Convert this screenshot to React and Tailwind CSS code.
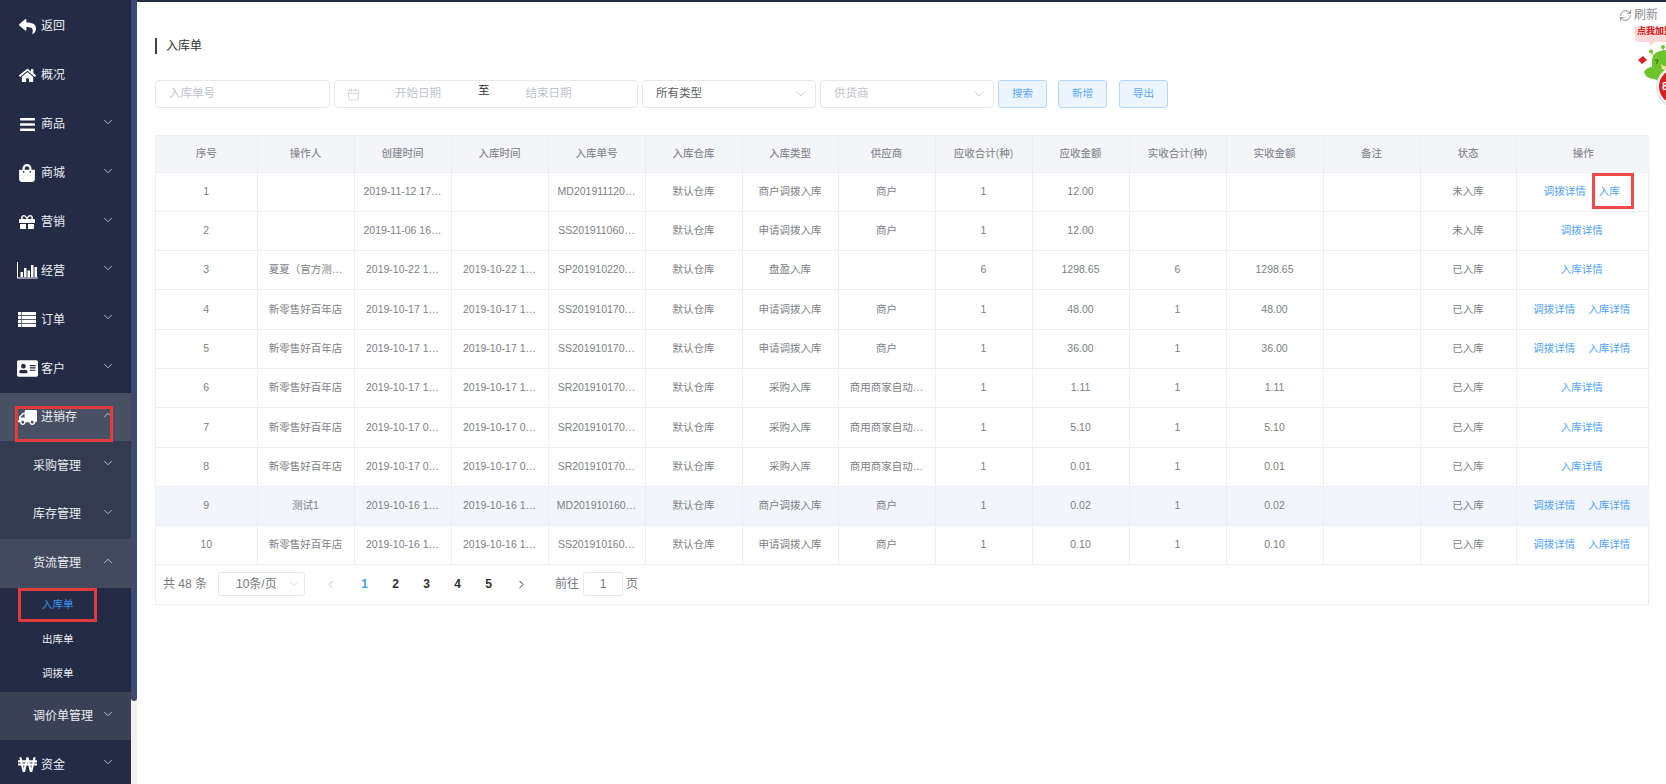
import React from 'react';
import { ChevronDown, ChevronUp, ChevronLeft, ChevronRight, RefreshCw, Calendar } from 'lucide-react';
import { FaReply, FaHome, FaBars, FaShoppingBag, FaGift, FaAddressCard, FaTruck, FaWonSign } from 'react-icons/fa';

const ChartIcon = () => (
  <svg width="21" height="17" viewBox="0 0 21 17" fill="currentColor">
    <path d="M0 0h1v15.5h21v1H0z" />
    <rect x="3.5" y="10" width="2.5" height="5" />
    <rect x="7" y="6" width="2.5" height="9" />
    <rect x="10.5" y="8.5" width="2.5" height="6.5" />
    <rect x="14" y="3" width="2.5" height="12" />
    <rect x="17.5" y="5" width="2.5" height="10" />
  </svg>
);

const ListIcon = () => (
  <svg width="18" height="15" viewBox="0 0 18 15" fill="currentColor">
    <path d="M0 0h3.4v3.2H0zM4 0h14v3.2H4zM0 3.9h3.4v3.2H0zM4 3.9h14v3.2H4zM0 7.8h3.4V11H0zM4 7.8h14V11H4zM0 11.7h3.4V15H0zM4 11.7h14V15H4z" />
  </svg>
);

const topMenu = [
  { label: '返回', icon: <FaReply className="w-[17px] h-[17px]" /> },
  { label: '概况', icon: <FaHome className="w-[17px] h-[17px]" /> },
  { label: '商品', icon: <FaBars className="w-[17px] h-[17px]" />, arrow: true },
  { label: '商城', icon: <FaShoppingBag className="w-[18px] h-[18px]" />, arrow: true },
  { label: '营销', icon: <FaGift className="w-[16px] h-[16px]" />, arrow: true },
  { label: '经营', icon: <ChartIcon />, arrow: true },
  { label: '订单', icon: <ListIcon />, arrow: true },
  { label: '客户', icon: <FaAddressCard className="w-[21px] h-[21px]" />, arrow: true },
];

const columns = [
  ['序号', 'w-[101px]'],
  ['操作人', 'w-[97px]'],
  ['创建时间', 'w-[97px]'],
  ['入库时间', 'w-[97px]'],
  ['入库单号', 'w-[97px]'],
  ['入库仓库', 'w-[97px]'],
  ['入库类型', 'w-[96px]'],
  ['供应商', 'w-[97px]'],
  ['应收合计(种)', 'w-[97px]'],
  ['应收金额', 'w-[97px]'],
  ['实收合计(种)', 'w-[97px]'],
  ['实收金额', 'w-[97px]'],
  ['备注', 'w-[97px]'],
  ['状态', 'w-[96px]'],
  ['操作', 'w-[134px]'],
];

const rows = [
  ['1', '', '2019-11-12 17…', '', 'MD201911120…', '默认仓库', '商户调拨入库', '商户', '1', '12.00', '', '', '', '未入库', ['调拨详情', '入库']],
  ['2', '', '2019-11-06 16…', '', 'SS201911060…', '默认仓库', '申请调拨入库', '商户', '1', '12.00', '', '', '', '未入库', ['调拨详情']],
  ['3', '夏夏（官方测…', '2019-10-22 1…', '2019-10-22 1…', 'SP201910220…', '默认仓库', '盘盈入库', '', '6', '1298.65', '6', '1298.65', '', '已入库', ['入库详情']],
  ['4', '新零售好百年店', '2019-10-17 1…', '2019-10-17 1…', 'SS201910170…', '默认仓库', '申请调拨入库', '商户', '1', '48.00', '1', '48.00', '', '已入库', ['调拨详情', '入库详情']],
  ['5', '新零售好百年店', '2019-10-17 1…', '2019-10-17 1…', 'SS201910170…', '默认仓库', '申请调拨入库', '商户', '1', '36.00', '1', '36.00', '', '已入库', ['调拨详情', '入库详情']],
  ['6', '新零售好百年店', '2019-10-17 1…', '2019-10-17 1…', 'SR201910170…', '默认仓库', '采购入库', '商用商家自动…', '1', '1.11', '1', '1.11', '', '已入库', ['入库详情']],
  ['7', '新零售好百年店', '2019-10-17 0…', '2019-10-17 0…', 'SR201910170…', '默认仓库', '采购入库', '商用商家自动…', '1', '5.10', '1', '5.10', '', '已入库', ['入库详情']],
  ['8', '新零售好百年店', '2019-10-17 0…', '2019-10-17 0…', 'SR201910170…', '默认仓库', '采购入库', '商用商家自动…', '1', '0.01', '1', '0.01', '', '已入库', ['入库详情']],
  ['9', '测试1', '2019-10-16 1…', '2019-10-16 1…', 'MD201910160…', '默认仓库', '商户调拨入库', '商户', '1', '0.02', '1', '0.02', '', '已入库', ['调拨详情', '入库详情']],
  ['10', '新零售好百年店', '2019-10-16 1…', '2019-10-16 1…', 'SS201910160…', '默认仓库', '申请调拨入库', '商户', '1', '0.10', '1', '0.10', '', '已入库', ['调拨详情', '入库详情']],
];

function Arrow({ open }) {
  return open
    ? <ChevronUp className="absolute left-[101px] top-[15px] w-[14px] h-[14px] text-[#c8ccd6]" strokeWidth={1.5} />
    : <ChevronDown className="absolute left-[101px] top-[15px] w-[14px] h-[14px] text-[#c8ccd6]" strokeWidth={1.5} />;
}

function MenuItem({ icon, label, arrow, open, className = 'h-[48.9px]' }) {
  return (
    <div className={`relative flex items-center text-xs text-[#eceef3] ${className}`}>
      <span className="w-[41px] pl-[13px] flex justify-center shrink-0 text-white">{icon}</span>
      <span>{label}</span>
      {arrow && <Arrow open={open} />}
    </div>
  );
}

function SubItem({ label, open, className = '' }) {
  return (
    <div className={`relative h-[48.9px] flex items-center pl-[33px] text-xs text-[#eceef3] ${className}`}>
      <span>{label}</span>
      <Arrow open={open} />
    </div>
  );
}

function Sidebar() {
  return (
    <div className="w-[131px] h-[784px] shrink-0 bg-[#232b45] pt-[2px] overflow-hidden">
      {topMenu.map((m) => <MenuItem key={m.label} {...m} />)}
      <MenuItem label="进销存" arrow open className="h-[48px] bg-[#4a5064]" icon={<FaTruck className="w-[19px] h-[19px] -scale-x-100" />} />
      <SubItem label="采购管理" className="bg-[#333b50]" />
      <SubItem label="库存管理" className="bg-[#333b50]" />
      <SubItem label="货流管理" open className="bg-[#434a5e]" />
      <div className="h-[34.6px] flex items-center pl-[42px] text-[10.5px] text-[#3f93f5]">入库单</div>
      <div className="h-[34.6px] flex items-center pl-[42px] text-[10.5px] text-[#eceef3]">出库单</div>
      <div className="h-[34.6px] flex items-center pl-[42px] text-[10.5px] text-[#eceef3]">调拨单</div>
      <SubItem label="调价单管理" className="bg-[#3a4156]" />
      <MenuItem label="资金" arrow icon={<FaWonSign className="w-[19px] h-[19px]" />} />
    </div>
  );
}

function Field({ placeholder, className = '', value, arrow }) {
  return (
    <div className={`h-[28px] bg-white border border-[#e6e8ef] rounded-[4px] flex items-center justify-between pl-[13px] pr-[6px] text-[11.5px] ${value ? 'text-[#606266]' : 'text-[#c0c4cc]'} ${className}`}>
      <span>{value || placeholder}</span>
      {arrow && <ChevronDown className="w-[16px] h-[16px] text-[#c0c4cc]" strokeWidth={1.25} />}
    </div>
  );
}

function Btn({ children, className = '' }) {
  return (
    <button className={`h-[28px] w-[49px] bg-[#ecf5ff] border border-[#b3d8ff] rounded-[3px] text-[10.5px] text-[#5aa9fb] ${className}`}>
      {children}
    </button>
  );
}

function Mascot() {
  return (
    <svg className="absolute right-0 top-[22px]" width="36" height="90" viewBox="0 0 36 90">
      <path d="M4 5 L8 4 L12 5 L16 4 L20 5 L24 4 L28 5 L32 4 L36 5 V20 H26 L20 24 L19 20 H8 L5 18 L6 14 L3 11 L5 8 Z" fill="#fbd9d9" />
      <text x="7" y="12" fontSize="9" fontWeight="700" fill="#cf1414" fontFamily="Noto Sans CJK SC, sans-serif">点我加盟</text>
      <path d="M8 38 L13 34 L17 38 L12 42 Z" fill="#dd1f2b" />
      <path d="M14 50 Q17 45 22 45 L22 37 Q24 30 30 29 L36 28 V62 L24 57 Q16 57 14 50 Z" fill="#6fc42c" />
      <path d="M21 30 L24 34 M33 25 L33 29" stroke="#6fc42c" strokeWidth="1" />
      <circle cx="21" cy="29.5" r="2" fill="#6fc42c" />
      <circle cx="33" cy="25" r="2" fill="#6fc42c" />
      <path d="M25 38 H28 L26.5 42" stroke="#2f5d1a" strokeWidth="0.9" fill="none" />
      <path d="M31 42 Q34 45 36 44 V48 L32 47 Z" fill="#f3e3a0" />
      <circle cx="47" cy="65" r="21" fill="#e3e3e3" />
      <circle cx="47" cy="64.5" r="19.5" fill="#ffffff" />
      <circle cx="47" cy="64.5" r="18" fill="#d8201c" />
      <text x="32" y="68" fontSize="11" fontWeight="700" fill="#fff" fontFamily="Liberation Sans, sans-serif">8</text>
    </svg>
  );
}

function Pagination() {
  return (
    <div className="h-[38px] flex items-center pl-[7px] text-xs text-[#77797f]">
      <span className="w-[55px]">共 48 条</span>
      <div className="w-[87px] h-[24px] border border-[#e6e8ef] rounded-[3px] flex items-center justify-between pl-[17px] pr-[4px]">
        <span>10条/页</span>
        <ChevronDown className="w-[12px] h-[12px] text-[#c0c4cc]" strokeWidth={1.25} />
      </div>
      <ChevronLeft className="ml-[19px] w-[13px] h-[13px] text-[#b0b3b9]" strokeWidth={1.5} />
      <div className="ml-[12px] flex font-bold text-[#303133]">
        {['1', '2', '3', '4', '5'].map((n) => (
          <span key={n} className={`w-[31px] text-center ${n === '1' ? 'text-[#409eff]' : ''}`}>{n}</span>
        ))}
      </div>
      <ChevronRight className="ml-[11px] w-[13px] h-[13px] text-[#303133]" strokeWidth={1.75} />
      <span className="ml-[27px]">前往</span>
      <div className="ml-[4px] w-[40px] h-[24px] border border-[#e6e8ef] rounded-[3px] flex items-center justify-center">1</div>
      <span className="ml-[3px]">页</span>
    </div>
  );
}

function DataTable() {
  return (
    <div className="mt-[27px] border border-[#eceef5] w-[1494px] h-[470px]">
      <table className="table-fixed w-[1492px] text-[10.5px] text-[#7d7f85]">
        <colgroup>
          {columns.map(([name, w]) => <col key={name} className={w} />)}
        </colgroup>
        <thead>
          <tr className="bg-[#f4f5f9]">
            {columns.map(([name]) => (
              <th key={name} className="h-[36px] font-medium text-[#8a8d93] border-r border-b border-[#eceef5] last:border-r-0">{name}</th>
            ))}
          </tr>
        </thead>
        <tbody>
          {rows.map((row) => (
            <tr key={row[0]} className={row[0] === '9' ? 'bg-[#f2f6fc]' : ''}>
              {row.map((cell, i) => (
                <td key={i} className="h-[39.3px] p-0 text-center border-r border-b border-[#eceef5] last:border-r-0 whitespace-nowrap">
                  {Array.isArray(cell)
                    ? <span className="inline-flex gap-[13px] pr-[3px] text-[#4ea3fb]">{cell.map((a) => <a key={a}>{a}</a>)}</span>
                    : cell}
                </td>
              ))}
            </tr>
          ))}
        </tbody>
      </table>
      <Pagination />
    </div>
  );
}

export default function App() {
  return (
    <div className="relative flex w-[1666px] h-[784px] overflow-hidden bg-white font-['Liberation_Sans','Noto_Sans_CJK_SC',sans-serif]">
      <Sidebar />

      {/* sidebar scrollbar */}
      <div className="w-[6px] shrink-0 bg-[#f1f1f1]">
        <div className="h-[701px] bg-[#3e4a75] rounded-b-[3px]" />
      </div>

      <div className="relative flex-1 min-w-0">
        <div className="h-[2px] bg-[#232b45]" />
        <div className="pl-[18px] pt-[36px]">
          <div className="h-[16px] flex items-center border-l-2 border-[#3c4463] pl-[9px] text-xs text-[#303133]">入库单</div>

          <div className="mt-[26px] flex items-center">
            <Field placeholder="入库单号" className="w-[175px]" />
            <div className="ml-[4px] w-[304px] h-[28px] border border-[#e6e8ef] rounded-[4px] flex items-center text-[11.5px] text-[#c0c4cc]">
              <Calendar className="ml-[12px] w-[13px] h-[13px]" strokeWidth={1.25} />
              <span className="ml-[35px]">开始日期</span>
              <span className="ml-[37px] mb-[7px] text-[#303133]">至</span>
              <span className="ml-[36px]">结束日期</span>
            </div>
            <Field value="所有类型" arrow className="ml-[4px] w-[174px]" />
            <Field placeholder="供货商" arrow className="ml-[4px] w-[174px]" />
            <Btn className="ml-[4px]">搜索</Btn>
            <Btn className="ml-[11px]">新增</Btn>
            <Btn className="ml-[12px]">导出</Btn>
          </div>

          <DataTable />
        </div>

        {/* refresh */}
        <div className="absolute right-[8px] top-[7px] flex items-center gap-[2px] text-xs text-[#8a8c92]">
          <RefreshCw className="w-[13px] h-[13px] text-[#77797f]" strokeWidth={1.5} />
          <span>刷新</span>
        </div>
        <Mascot />
      </div>

      {/* red annotation boxes */}
      <div className="absolute left-[15px] top-[406px] w-[98px] h-[36px] border-[3px] border-[#e23b3b]" />
      <div className="absolute left-[18px] top-[588px] w-[79px] h-[34px] border-[3px] border-[#e23b3b]" />
      <div className="absolute left-[1592px] top-[173px] w-[42px] h-[36px] border-[3px] border-[#f04a4a]" />
    </div>
  );
}
